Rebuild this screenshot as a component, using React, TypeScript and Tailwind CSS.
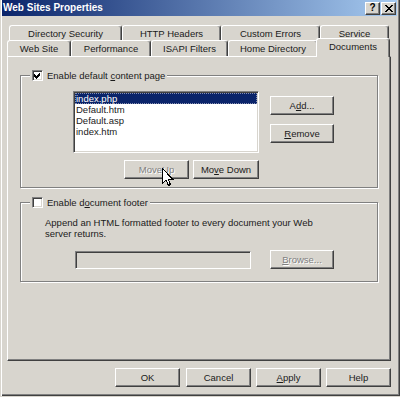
import React from "react";

function Tab({ className = "", children }: { className?: string; children: React.ReactNode }) {
  return (
    <div
      className={
        "flex items-center justify-center border-l border-t border-r border-l-white border-t-white border-r-[#404040] rounded-t-[3px] shadow-[inset_-1px_0_0_#808080] bg-[#d8d5ce] whitespace-nowrap " +
        className
      }
    >
      {children}
    </div>
  );
}

function Btn({
  className = "",
  children,
  disabled = false,
}: {
  className?: string;
  children: React.ReactNode;
  disabled?: boolean;
}) {
  return (
    <div
      className={
        "flex items-center justify-center h-[19px] border border-t-white border-l-white border-r-[#404040] border-b-[#404040] shadow-[inset_-1px_-1px_0_#808080] shrink-0 " +
        (disabled ? "text-[#808080] [text-shadow:1px_1px_0_#ffffff] " : "text-[#1a1a1a] ") +
        className
      }
    >
      {children}
    </div>
  );
}

function Check({ checked }: { checked: boolean }) {
  return (
    <div className="w-[11px] h-[11px] bg-white border border-t-[#808080] border-l-[#808080] border-r-white border-b-white shadow-[inset_1px_1px_0_#404040,inset_-1px_-1px_0_#d8d5ce] flex items-center justify-center shrink-0">
      {checked && (
        <svg width="7" height="7" viewBox="0 0 7 7" shapeRendering="crispEdges">
          <polygon points="0,2 2,4 6,0 6,3 2,7 0,5" fill="#000" />
        </svg>
      )}
    </div>
  );
}

function U({ children }: { children: React.ReactNode }) {
  return <span className="underline underline-offset-[1px]">{children}</span>;
}

export default function App() {
  return (
    <div className="w-[400px] h-[397px] bg-[#d8d5ce] overflow-hidden relative font-['Liberation_Sans',Arial,sans-serif] text-[9.5px] leading-[11px] text-[#1a1a1a]">
      <div className="w-[400px] h-[396px] flex flex-col shadow-[inset_1px_0_0_#d8d5ce,inset_2px_0_0_#ffffff,inset_-1px_-1px_0_#404040,inset_-2px_-2px_0_#808080]">
        {/* Title bar */}
        <div className="ml-[2px] mr-[3px] h-[16px] flex items-center bg-[linear-gradient(to_right,#0a246a,#a6caf0)]">
          <div className="pl-[1px] text-white font-bold text-[10px] leading-[12px] flex-1">Web Sites Properties</div>
          <div className="flex gap-[1px] pr-[1px]">
            <div className="w-[15px] h-[13px] bg-[#d8d5ce] border border-t-white border-l-white border-r-[#404040] border-b-[#404040] shadow-[inset_-1px_-1px_0_#808080] flex items-center justify-center font-bold text-[10px] leading-[10px] pb-[1px] text-black">
              ?
            </div>
            <div className="w-[15px] h-[13px] bg-[#d8d5ce] border border-t-white border-l-white border-r-[#404040] border-b-[#404040] shadow-[inset_-1px_-1px_0_#808080] flex items-center justify-center">
              <svg width="8" height="7" viewBox="0 0 8 7" shapeRendering="crispEdges">
                <path d="M0 0 L7 7 M1 0 L8 7 M7 0 L0 7 M8 0 L1 7" stroke="#000" strokeWidth="1" />
              </svg>
            </div>
          </div>
        </div>

        {/* Tabs */}
        <div className="mt-[9px] flex flex-col">
          <div className="flex pl-[9px] h-[15px]">
            <Tab className="w-[113px] h-[15px]">Directory Security</Tab>
            <Tab className="w-[99px] h-[15px]">HTTP Headers</Tab>
            <Tab className="w-[99px] h-[15px]">Custom Errors</Tab>
            <Tab className="w-[69px] h-[15px]">Service</Tab>
          </div>
          <div className="flex pl-[7px] h-[16px] items-end">
            <Tab className="w-[64px] h-[16px]">Web Site</Tab>
            <Tab className="w-[80px] h-[16px]">Performance</Tab>
            <Tab className="w-[77px] h-[16px]">ISAPI Filters</Tab>
            <Tab className="w-[90px] h-[16px]">Home Directory</Tab>
            <Tab className="w-[74px] h-[19px] -ml-[2px] -mb-px relative z-10 pb-[3px]">Documents</Tab>
          </div>
        </div>

        {/* Panel */}
        <div className="ml-[7px] w-[384px] h-[305px] shrink-0 border border-t-white border-l-white border-r-[#404040] border-b-[#404040] shadow-[inset_-1px_-1px_0_#808080] pt-[18px] pl-[12px]">
          {/* Group 1 */}
          <div className="w-[358px] h-[113px] border border-[#808080] shadow-[1px_1px_0_#ffffff,inset_1px_1px_0_#ffffff] flex flex-col">
            <div className="-mt-[7px] ml-[9px] px-[2px] h-[13px] w-fit flex items-center gap-[4px] bg-[#d8d5ce]">
              <Check checked />
              <span>
                Enable default <U>c</U>ontent page
              </span>
            </div>
            <div className="flex pl-[52px] mt-[9px]">
              <div className="w-[186px] flex flex-col">
                <div className="h-[62px] bg-white border border-t-[#808080] border-l-[#808080] border-r-white border-b-white shadow-[inset_1px_1px_0_#404040,inset_-1px_-1px_0_#d8d5ce] p-[1px]">
                  <div className="h-[11px] bg-[#0a246a] text-white pl-[1px] outline-1 outline-dotted outline-[#8890b0] -outline-offset-1">
                    index.php
                  </div>
                  <div className="h-[11px] pl-[1px]">Default.htm</div>
                  <div className="h-[11px] pl-[1px]">Default.asp</div>
                  <div className="h-[11px] pl-[1px]">index.htm</div>
                </div>
                <div className="flex justify-end mt-[7px] gap-[4px]">
                  <Btn className="w-[65px]" disabled>
                    Move <U>U</U>p
                  </Btn>
                  <Btn className="w-[66px]">
                    Mo<U>v</U>e Down
                  </Btn>
                </div>
              </div>
              <div className="ml-[11px] flex flex-col">
                <Btn className="w-[64px] mt-[5px]">
                  A<U>d</U>d...
                </Btn>
                <Btn className="w-[64px] mt-[9px]">
                  <U>R</U>emove
                </Btn>
              </div>
            </div>
          </div>

          {/* Group 2 */}
          <div className="mt-[14px] w-[358px] h-[80px] border border-[#808080] shadow-[1px_1px_0_#ffffff,inset_1px_1px_0_#ffffff] flex flex-col">
            <div className="-mt-[7px] ml-[9px] px-[2px] h-[13px] w-fit flex items-center gap-[4px] bg-[#d8d5ce]">
              <Check checked={false} />
              <span>
                Enable d<U>o</U>cument footer
              </span>
            </div>
            <div className="ml-[24px] mt-[8px] leading-[11px]">
              <div>Append an HTML formatted footer to every document your Web</div>
              <div>server returns.</div>
            </div>
            <div className="flex items-end pl-[54px] mt-[11px]">
              <div className="w-[176px] h-[18px] bg-[#d8d5ce] border border-t-[#808080] border-l-[#808080] border-r-white border-b-white shadow-[inset_1px_1px_0_#404040,inset_-1px_-1px_0_#d8d5ce]" />
              <Btn className="w-[64px] ml-[19px]" disabled>
                <U>B</U>rowse...
              </Btn>
            </div>
          </div>
        </div>

        {/* Bottom buttons */}
        <div className="flex mt-[7px] pl-[115px]">
          <Btn className="w-[65px]">OK</Btn>
          <Btn className="w-[65px] ml-[6px]">Cancel</Btn>
          <Btn className="w-[65px] ml-[5px]">
            <U>A</U>pply
          </Btn>
          <Btn className="w-[65px] ml-[5px]">Help</Btn>
        </div>
      </div>

      {/* Mouse cursor */}
      <svg className="absolute left-[162px] top-[168px]" width="12" height="19" viewBox="0 0 12 19" shapeRendering="crispEdges">
        <path d="M0.5 0.5 L0.5 15.5 L4 12 L6.5 17.5 L8.5 16.5 L6 11 L10.5 11 Z" fill="#fff" stroke="#000" strokeWidth="1" strokeLinejoin="miter" />
      </svg>
    </div>
  );
}
